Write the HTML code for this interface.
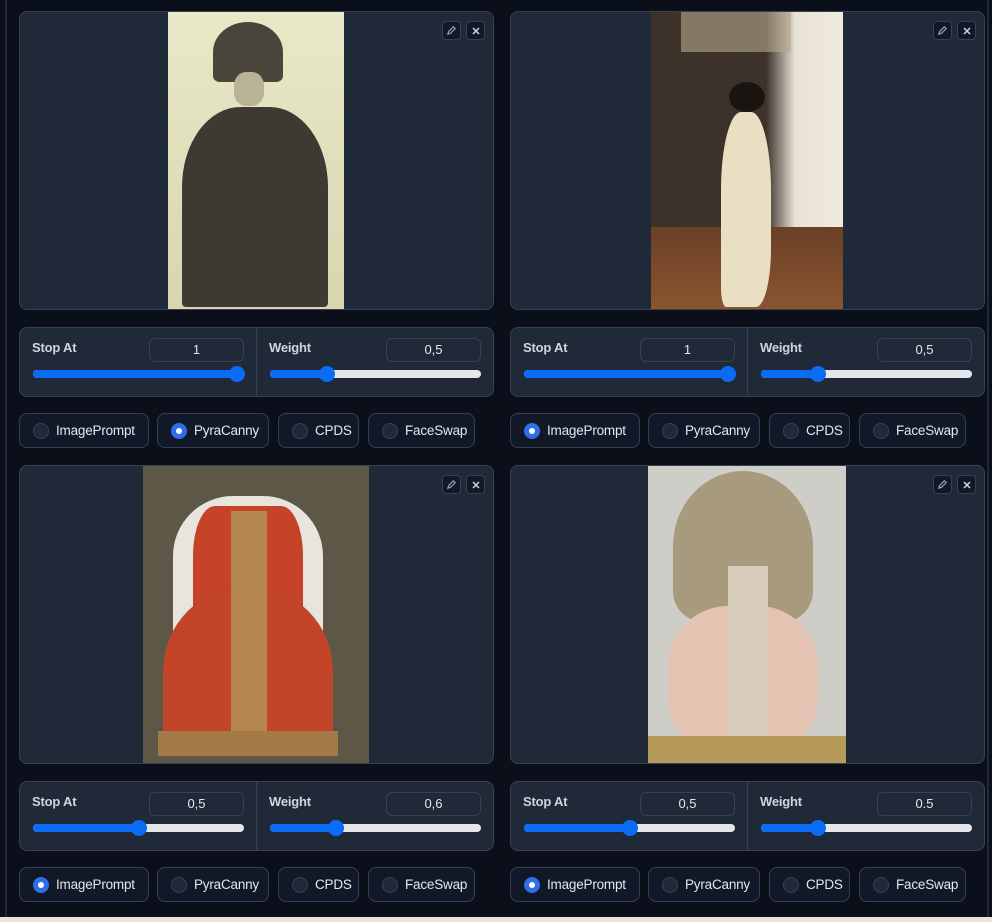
<!DOCTYPE html>
<html><head><meta charset="utf-8"><style>
*{box-sizing:border-box;margin:0;padding:0}
body{width:992px;height:922px;background:#0b0f19;position:relative;overflow:hidden;font-family:"Liberation Sans",sans-serif;color:#e5e7eb}
.vl{position:absolute;top:0;width:2px;height:918px;background:#1f2937}
.bot{position:absolute;left:0;top:917px;width:992px;height:5px;background:#e9e4d4}
.blk{position:absolute;width:475px}
.img{position:absolute;left:0;top:0;width:475px;height:299px;background:#1f2937;border:1px solid #374151;border-radius:8px;overflow:hidden}
.pic{position:absolute;top:0;height:299px}
.ib{position:absolute;top:9px;width:19px;height:19px;border:1px solid #374151;border-radius:4px;background:#111827;display:flex;align-items:center;justify-content:center}
.sp{position:absolute;left:0;top:316px;width:475px;height:70px;background:#1f2937;border:1px solid #374151;border-radius:8px}
.div{position:absolute;left:236px;top:0;width:1px;height:68px;background:#374151}
.lab{position:absolute;top:12px;font-size:13px;font-weight:bold;color:#d1d5db;letter-spacing:-0.2px}
.inp{position:absolute;top:10px;width:95px;height:24px;border:1px solid #374151;border-radius:6px;background:#1f2937;text-align:center;font-size:13px;line-height:22px;color:#e5e7eb}
.tr{position:absolute;top:42px;height:8px;border-radius:4px;background:#e5e7eb;overflow:visible}
.fill{position:absolute;left:0;top:0;height:8px;border-radius:4px;background:#0a6cf5}
.th{position:absolute;top:-4px;width:16px;height:16px;border-radius:50%;background:#0a6cf5;margin-left:-8px}
.rd{position:absolute;top:402px;height:35px;background:#111827;border:1px solid #374151;border-radius:8px;font-size:13.5px;color:#e5e7eb;line-height:33px;padding-left:36px;letter-spacing:-0.2px}
.rd i{position:absolute;left:13px;top:9px;width:16px;height:16px;border-radius:50%;border:1px solid #374151;background:#1f2937}
.rd.on i{background:#2f6ee8;border-color:#2f6ee8}
.rd.on i:after{content:"";position:absolute;left:4px;top:4px;width:6px;height:6px;border-radius:50%;background:#fff}
</style></head><body>
<div class="vl" style="left:5px"></div><div class="vl" style="left:987px"></div>
<div class="bot"></div>

<!-- block 1 -->
<div class="blk" style="left:19px;top:11px">
 <div class="img">
  <div class="pic" style="left:148px;width:176px;background:linear-gradient(#e9e8c8,#d8d6b0)">
   <div style="position:absolute;left:45px;top:10px;width:70px;height:60px;border-radius:50% 50% 10% 10%;background:#4a453a"></div>
   <div style="position:absolute;left:66px;top:60px;width:30px;height:34px;border-radius:40%;background:#b8b296"></div>
   <div style="position:absolute;left:14px;top:95px;width:146px;height:200px;border-radius:40% 40% 4px 4px;background:#3e3a33"></div>
  </div>
  <div class="ib" style="left:422px"><svg width="11" height="11" viewBox="0 0 12 12"><path d="M2 10l1-3 5-5 2 2-5 5z" fill="none" stroke="#9ca3af" stroke-width="1.3"/></svg></div>
  <div class="ib" style="left:446px"><svg width="10" height="10" viewBox="0 0 10 10"><path d="M2 2l6 6M8 2l-6 6" stroke="#d1d5db" stroke-width="1.5"/></svg></div>
 </div>
 <div class="sp"><div class="div"></div>
  <div class="lab" style="left:12px">Stop At</div><div class="inp" style="left:129px">1</div>
  <div class="tr" style="left:13px;width:211px"><div class="fill" style="width:211px"></div><div class="th" style="left:204px"></div></div>
  <div class="lab" style="left:249px">Weight</div><div class="inp" style="left:366px">0,5</div>
  <div class="tr" style="left:250px;width:211px"><div class="fill" style="width:57px"></div><div class="th" style="left:57px"></div></div>
 </div>
 <div class="rd" style="left:0;width:130px"><i></i>ImagePrompt</div>
 <div class="rd on" style="left:138px;width:112px"><i></i>PyraCanny</div>
 <div class="rd" style="left:259px;width:81px"><i></i>CPDS</div>
 <div class="rd" style="left:349px;width:107px"><i></i>FaceSwap</div>
</div>

<!-- block 2 -->
<div class="blk" style="left:510px;top:11px">
 <div class="img">
  <div class="pic" style="left:140px;width:192px;background:linear-gradient(90deg,#3a3128 0%,#3d332b 60%,#e8e2d6 75%,#efe9df 100%)">
   <div style="position:absolute;left:0;top:215px;width:192px;height:84px;background:linear-gradient(#6b4026,#8a5530)"></div>
   <div style="position:absolute;left:30px;top:0;width:110px;height:40px;background:#b8a88a;opacity:.6"></div>
   <div style="position:absolute;left:78px;top:70px;width:36px;height:30px;border-radius:50%;background:#1a1410"></div>
   <div style="position:absolute;left:70px;top:100px;width:50px;height:195px;border-radius:40% 40% 30% 10%;background:#e9dfc2"></div>
  </div>
  <div class="ib" style="left:422px"><svg width="11" height="11" viewBox="0 0 12 12"><path d="M2 10l1-3 5-5 2 2-5 5z" fill="none" stroke="#9ca3af" stroke-width="1.3"/></svg></div>
  <div class="ib" style="left:446px"><svg width="10" height="10" viewBox="0 0 10 10"><path d="M2 2l6 6M8 2l-6 6" stroke="#d1d5db" stroke-width="1.5"/></svg></div>
 </div>
 <div class="sp"><div class="div"></div>
  <div class="lab" style="left:12px">Stop At</div><div class="inp" style="left:129px">1</div>
  <div class="tr" style="left:13px;width:211px"><div class="fill" style="width:211px"></div><div class="th" style="left:204px"></div></div>
  <div class="lab" style="left:249px">Weight</div><div class="inp" style="left:366px">0,5</div>
  <div class="tr" style="left:250px;width:211px"><div class="fill" style="width:57px"></div><div class="th" style="left:57px"></div></div>
 </div>
 <div class="rd on" style="left:0;width:130px"><i></i>ImagePrompt</div>
 <div class="rd" style="left:138px;width:112px"><i></i>PyraCanny</div>
 <div class="rd" style="left:259px;width:81px"><i></i>CPDS</div>
 <div class="rd" style="left:349px;width:107px"><i></i>FaceSwap</div>
</div>

<!-- block 3 -->
<div class="blk" style="left:19px;top:465px">
 <div class="img">
  <div class="pic" style="left:123px;width:226px;background:#5d5748">
   <div style="position:absolute;left:30px;top:30px;width:150px;height:150px;border-radius:40% 40% 10% 10%;background:#e9e4dc"></div>
   <div style="position:absolute;left:50px;top:40px;width:110px;height:250px;border-radius:20% 20% 8% 8%;background:#c6432a"></div>
   <div style="position:absolute;left:20px;top:120px;width:170px;height:170px;border-radius:50% 50% 6px 6px;background:#c24429"></div>
   <div style="position:absolute;left:88px;top:45px;width:36px;height:245px;background:#b5874f"></div>
   <div style="position:absolute;left:15px;top:265px;width:180px;height:25px;background:#a57a47"></div>
  </div>
  <div class="ib" style="left:422px"><svg width="11" height="11" viewBox="0 0 12 12"><path d="M2 10l1-3 5-5 2 2-5 5z" fill="none" stroke="#9ca3af" stroke-width="1.3"/></svg></div>
  <div class="ib" style="left:446px"><svg width="10" height="10" viewBox="0 0 10 10"><path d="M2 2l6 6M8 2l-6 6" stroke="#d1d5db" stroke-width="1.5"/></svg></div>
 </div>
 <div class="sp"><div class="div"></div>
  <div class="lab" style="left:12px">Stop At</div><div class="inp" style="left:129px">0,5</div>
  <div class="tr" style="left:13px;width:211px"><div class="fill" style="width:106px"></div><div class="th" style="left:106px"></div></div>
  <div class="lab" style="left:249px">Weight</div><div class="inp" style="left:366px">0,6</div>
  <div class="tr" style="left:250px;width:211px"><div class="fill" style="width:66px"></div><div class="th" style="left:66px"></div></div>
 </div>
 <div class="rd on" style="left:0;width:130px"><i></i>ImagePrompt</div>
 <div class="rd" style="left:138px;width:112px"><i></i>PyraCanny</div>
 <div class="rd" style="left:259px;width:81px"><i></i>CPDS</div>
 <div class="rd" style="left:349px;width:107px"><i></i>FaceSwap</div>
</div>

<!-- block 4 -->
<div class="blk" style="left:510px;top:465px">
 <div class="img">
  <div class="pic" style="left:137px;width:198px;background:#cfcdc7">
   <div style="position:absolute;left:25px;top:5px;width:140px;height:150px;border-radius:50% 50% 20% 20%;background:#a79a7d"></div>
   <div style="position:absolute;left:20px;top:140px;width:150px;height:150px;border-radius:40%;background:#e4c3b3"></div>
   <div style="position:absolute;left:80px;top:100px;width:40px;height:190px;background:#d8cdbb"></div>
   <div style="position:absolute;left:0;top:270px;width:198px;height:29px;background:#b59a5a"></div>
  </div>
  <div class="ib" style="left:422px"><svg width="11" height="11" viewBox="0 0 12 12"><path d="M2 10l1-3 5-5 2 2-5 5z" fill="none" stroke="#9ca3af" stroke-width="1.3"/></svg></div>
  <div class="ib" style="left:446px"><svg width="10" height="10" viewBox="0 0 10 10"><path d="M2 2l6 6M8 2l-6 6" stroke="#d1d5db" stroke-width="1.5"/></svg></div>
 </div>
 <div class="sp"><div class="div"></div>
  <div class="lab" style="left:12px">Stop At</div><div class="inp" style="left:129px">0,5</div>
  <div class="tr" style="left:13px;width:211px"><div class="fill" style="width:106px"></div><div class="th" style="left:106px"></div></div>
  <div class="lab" style="left:249px">Weight</div><div class="inp" style="left:366px">0.5</div>
  <div class="tr" style="left:250px;width:211px"><div class="fill" style="width:57px"></div><div class="th" style="left:57px"></div></div>
 </div>
 <div class="rd on" style="left:0;width:130px"><i></i>ImagePrompt</div>
 <div class="rd" style="left:138px;width:112px"><i></i>PyraCanny</div>
 <div class="rd" style="left:259px;width:81px"><i></i>CPDS</div>
 <div class="rd" style="left:349px;width:107px"><i></i>FaceSwap</div>
</div>
</body></html>
